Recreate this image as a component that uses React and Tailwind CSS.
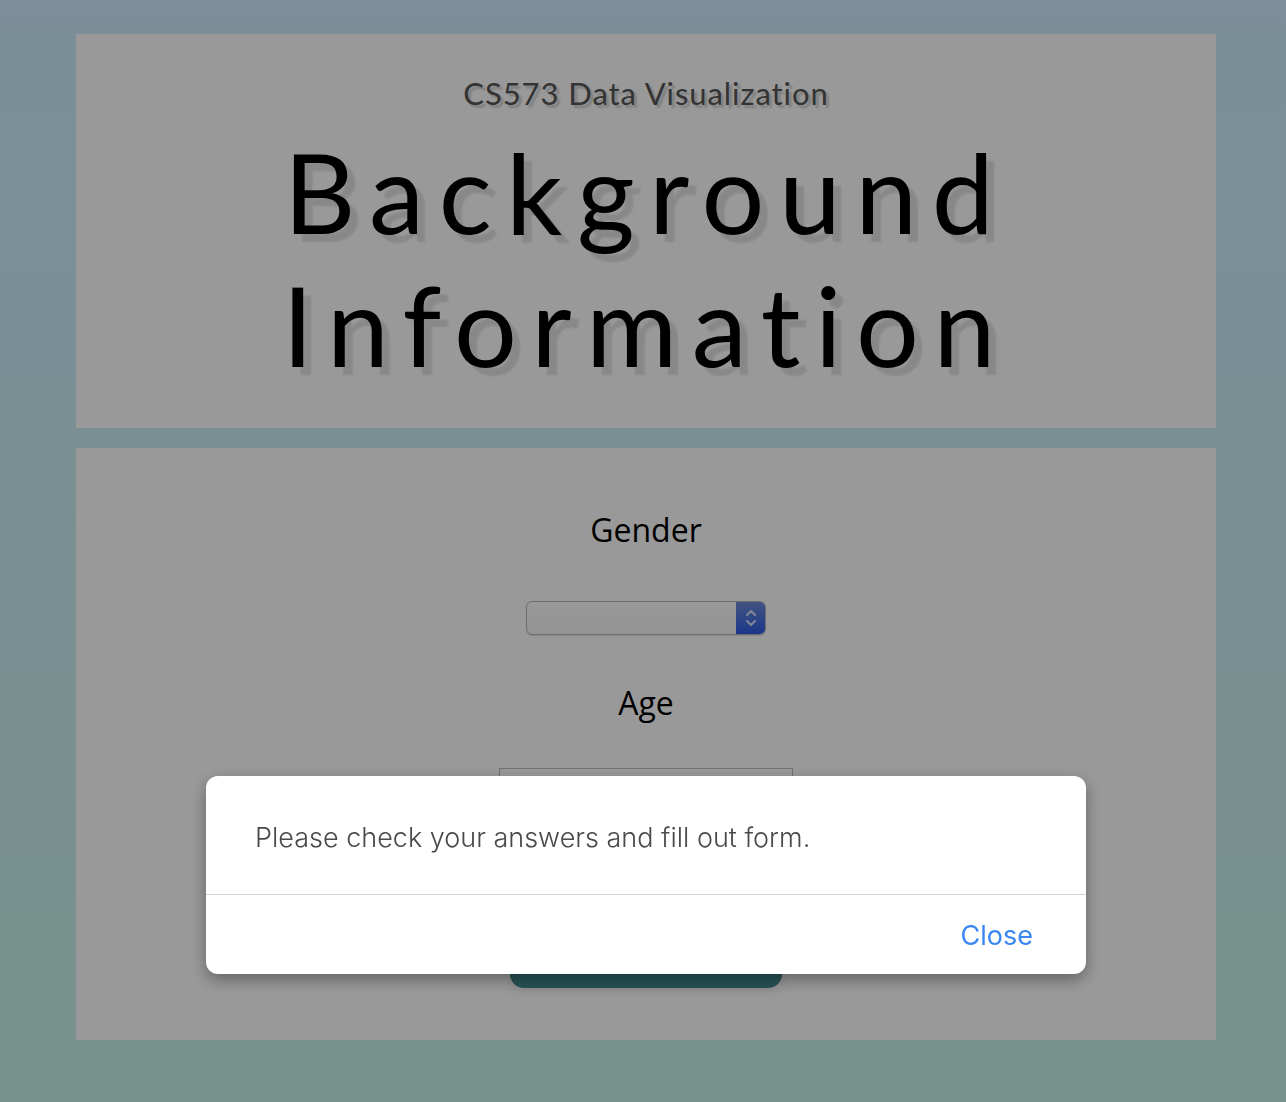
import { useState } from "react";

// ── Native-looking select stub ───────────────────────────────────────────────
function SelectBox() {
  return (
    <div className="flex h-[34px] w-[240px] overflow-hidden rounded-[6px] border border-[#b8b8b8] bg-gradient-to-b from-white to-[#f6f6f6] shadow-[0_1px_1px_rgba(0,0,0,0.12)]">
      <div className="flex-1" />
      <div className="flex w-[29px] flex-col items-center justify-center bg-gradient-to-b from-[#6d8bd6] to-[#2f5ae6]">
        <svg width="14" height="22" viewBox="0 0 14 22" fill="none" stroke="#d9e2f7" strokeWidth="2" strokeLinecap="round" strokeLinejoin="round">
          <path d="M3 8 L7 4 L11 8" />
          <path d="M3 14 L7 18 L11 14" />
        </svg>
      </div>
    </div>
  );
}

export default function App() {
  const [open, setOpen] = useState(true);

  return (
    <div className="relative min-h-[1102px] bg-gradient-to-b from-[#cdedff] to-[#c6f3e9] pt-[34px] pb-[62px]">
      {/* ── Title card ─────────────────────────────────── */}
      <section className="ml-[76px] flex h-[394px] w-[1140px] flex-col items-center bg-white pt-[39px]">
        <p
          className="text-[31px] leading-[40px] tracking-[0.03em] text-[#555555] [text-shadow:3px_3px_2px_rgba(0,0,0,0.18)]"
          style={{ fontFamily: "Lato, 'Open Sans', sans-serif" }}
        >
          CS573 Data Visualization
        </p>
        <h1
          className="mt-[12px] text-center text-[111px] font-normal leading-[133px] tracking-[0.13em] text-black [text-shadow:8px_8px_2px_rgba(0,0,0,0.11)]"
          style={{ fontFamily: "Lato, 'Open Sans', sans-serif" }}
        >
          Background
          <br />
          Information
        </h1>
      </section>

      {/* ── Form card ──────────────────────────────────── */}
      <section
        className="mt-[20px] ml-[76px] flex h-[592px] w-[1140px] flex-col items-center bg-white pt-[60px]"
        style={{ fontFamily: "'Open Sans', 'Noto Sans', sans-serif" }}
      >
        <label className="text-[32px] leading-[44px] text-black">Gender</label>
        <div className="mt-[49px]">
          <SelectBox />
        </div>
        <label className="mt-[46px] text-[32px] leading-[44px] text-black">Age</label>
        <input className="mt-[43px] h-[38px] w-[294px] border border-[#bdbdbd] bg-white" />
        <button className="mt-[132px] h-[50px] w-[272px] rounded-[14px] bg-[#418a8d] text-[22px] text-white shadow-[0_4px_10px_rgba(0,0,0,0.08)]">
          Submit
        </button>
      </section>

      {/* ── Alert modal ────────────────────────────────── */}
      {open && (
        <div className="fixed inset-0 flex justify-center bg-black/40 pt-[776px]">
          <div
            className="h-[198px] w-[880px] ml-[6px] flex flex-col rounded-[12px] bg-white shadow-[0_6px_16px_rgba(0,0,0,0.35)]"
            style={{ fontFamily: "Inter, Roboto, 'Liberation Sans', Arial, sans-serif" }}
          >
            <div className="flex h-[119px] items-center border-b border-[#d4d4d4] pl-[49px] pt-[6px]">
              <p className="text-[27px] font-light text-[#4a4a4a]">
                Please check your answers and fill out form.
              </p>
            </div>
            <div className="flex flex-1 items-center justify-end pr-[53px] pt-[4px]">
              <button
                onClick={() => setOpen(false)}
                className="text-[27px] font-normal text-[#3a86f5]"
              >
                Close
              </button>
            </div>
          </div>
        </div>
      )}
    </div>
  );
}
